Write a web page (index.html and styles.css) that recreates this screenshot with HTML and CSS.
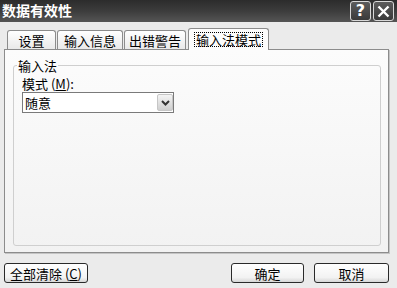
FILE: index.html
```html
<!DOCTYPE html>
<html lang="zh">
<head>
<meta charset="utf-8">
<title>数据有效性</title>
<link rel="stylesheet" href="styles.css">
</head>
<body>
<div class="window">
  <div class="titlebar">
    <span class="title">数据有效性</span>
    <div class="tbtns">
      <span class="tbtn help">?</span>
      <span class="tbtn close"><svg width="13" height="13" viewBox="0 0 13 13"><path d="M1.5 1.5 L11.5 11.5 M11.5 1.5 L1.5 11.5" stroke="#fff" stroke-width="2.4" fill="none"/></svg></span>
    </div>
  </div>
  <div class="content">
    <div class="tabs">
      <div class="tab t1">设置</div>
      <div class="tab t2">输入信息</div>
      <div class="tab t3">出错警告</div>
      <div class="tab active"><span class="focus">输入法模式</span></div>
    </div>
    <div class="panel">
      <fieldset class="group">
        <legend>输入法</legend>
        <div class="group-body">
          <div class="field-label">模式 (<u>M</u>):</div>
          <div class="select">
            <span class="select-text">随意</span>
            <span class="drop"><svg width="9" height="6" viewBox="0 0 9 6"><path d="M1 1 L4.5 4.5 L8 1" stroke="#333" stroke-width="2" fill="none"/></svg></span>
          </div>
        </div>
      </fieldset>
    </div>
    <div class="buttons">
      <button class="btn clear">全部清除 (<u>C</u>)</button>
      <button class="btn ok">确定</button>
      <button class="btn cancel">取消</button>
    </div>
  </div>
</div>
</body>
</html>
```
FILE: styles.css
```css
body {
  margin: 0;
  font-family: "Noto Sans CJK SC", "DejaVu Sans", sans-serif;
  font-size: 13px;
  color: #000;
}
.window {
  width: 397px;
  height: 288px;
  background: #ebebeb;
  display: flex;
  flex-direction: column;
  overflow: hidden;
}
.titlebar {
  height: 22px;
  flex: none;
  display: flex;
  justify-content: space-between;
  align-items: flex-start;
  background: linear-gradient(#2c2c2c, #3c3c3c 50%, #555);
}
.title {
  color: #fff;
  font-weight: bold;
  font-size: 14px;
  line-height: 21px;
  padding-left: 2px;
}
.tbtns {
  display: flex;
  gap: 2px;
  padding: 1px 3px 0 0;
}
.tbtn {
  box-sizing: border-box;
  width: 21px;
  height: 20px;
  border: 1px solid #d8d8d8;
  border-radius: 3px;
  background: linear-gradient(#5c5c5c, #3a3a3a);
  color: #fff;
  display: flex;
  align-items: center;
  justify-content: center;
  font-family: "DejaVu Sans", sans-serif;
  font-weight: bold;
  font-size: 16px;
  line-height: 1;
}
.content {
  flex: 1;
  padding: 0 8px 0 4px;
  display: flex;
  flex-direction: column;
}
.tabs {
  height: 27px;
  flex: none;
  display: flex;
  align-items: flex-end;
  padding-left: 3px;
}
.tab {
  box-sizing: border-box;
  height: 19px;
  border: 1px solid #8c8c8c;
  border-bottom: none;
  border-radius: 3px 3px 0 0;
  background: linear-gradient(#fff, #e9e9e9);
  display: flex;
  align-items: center;
  justify-content: center;
}
.t1 { width: 49px; }
.t2 { width: 66px; margin-left: 1px; }
.t3 { width: 62px; margin-left: 1px; }
.tab.active {
  width: 81px;
  height: 22px;
  margin-left: 2px;
  margin-bottom: -1px;
  position: relative;
  z-index: 1;
  background: #fcfcfc;
}
.focus {
  outline: 1px dotted #000;
  padding: 0 1px;
  line-height: 13px;
}
.panel {
  box-sizing: border-box;
  height: 204px;
  flex: none;
  border: 1px solid #8c8c8c;
  background: linear-gradient(#fcfcfc, #f2f2f2);
  box-shadow: 1px 1px 0 #c4c4c4;
  padding: 8px 7px 6px 8px;
  display: flex;
  flex-direction: column;
}
.group {
  flex: 1;
  margin: 0;
  padding: 0;
  min-width: 0;
  border: 1px solid #cfcfcf;
  border-radius: 3px;
}
.group legend {
  padding: 0 1px;
  margin-left: 3px;
  line-height: 15px;
}
.group-body {
  padding: 0 8px;
}
.field-label {
  margin-top: 3px;
  line-height: 15px;
}
.select {
  box-sizing: border-box;
  width: 152px;
  height: 21px;
  margin-top: 1px;
  border: 1px solid #7a7a7a;
  background: #fff;
  display: flex;
  align-items: flex-start;
}
.select-text {
  padding-left: 2px;
  line-height: 19px;
  flex: 1;
}
.drop {
  box-sizing: border-box;
  width: 16px;
  height: 17px;
  margin: 1px 0 0 0;
  border: 1px solid #c6c6c6;
  border-radius: 2px;
  background: linear-gradient(#f4f4f4, #cfcfcf);
  display: flex;
  align-items: center;
  justify-content: center;
}
.buttons {
  margin-top: 10px;
  display: flex;
}
.btn {
  box-sizing: border-box;
  height: 20px;
  padding: 0;
  border: 1px solid #2a2a2a;
  border-radius: 3px;
  background: linear-gradient(#fff, #f2f2f2 75%, #d6d6d6);
  font-family: "Noto Sans CJK SC", sans-serif;
  font-size: 13px;
  line-height: 17px;
  color: #000;
}
.clear { width: 84px; }
.ok { width: 73px; margin-left: auto; }
.cancel { width: 75px; margin-left: 10px; }
```
